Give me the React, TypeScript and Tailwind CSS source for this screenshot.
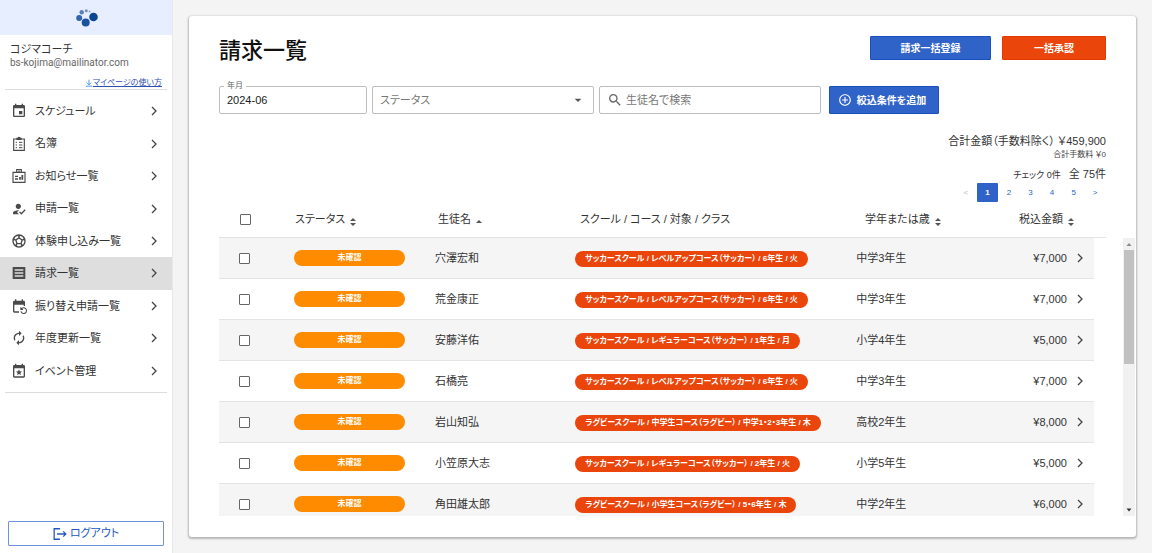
import type { ComponentType, ReactNode } from "react";
import {
  MdAddCircleOutline,
  MdArrowDropDown,
  MdAutorenew,
  MdEventRepeat,
  MdHowToReg,
  MdInsertInvitation,
  MdSearch,
  MdSportsSoccer,
} from "react-icons/md";

type IconProps = { className?: string };

const svgBase = { viewBox: "0 0 24 24", fill: "none", stroke: "currentColor", strokeWidth: 2 } as const;

function RosterIcon({ className }: IconProps) {
  return (
    <svg {...svgBase} className={className} aria-hidden="true">
      <path d="M4 4.500h16v17H4z" strokeWidth="1.700" />
      <path d="M9 5V3.500h1.500a1.500 1.500 0 0 1 3 0H15V5z" fill="currentColor" />
      <path d="M7 9.500h2M7 13.500h2M7 17.500h2M12 9.500h5M12 13.500h5M12 17.500h5" strokeWidth="1.500" />
    </svg>
  );
}

function NoticeIcon({ className }: IconProps) {
  return (
    <svg {...svgBase} className={className} aria-hidden="true">
      <path d="M3 6.500h18v15H3zM8.500 6.500v-4h7v4" strokeWidth="1.700" />
      <path d="M11 5h2" />
      <path d="M6 12.500h4.500M6 16.500h4.500" />
      <path d="M13.500 17.500v-4M17 17.500v-7" strokeWidth="2.600" />
    </svg>
  );
}

function InvoiceIcon({ className }: IconProps) {
  return (
    <svg viewBox="0 0 24 24" fill="currentColor" fillRule="evenodd" className={className} aria-hidden="true">
      <path d="M2.500 3h19v18h-19zM5.500 6.500v2h13v-2zM5.500 11v2h13v-2zM5.500 15.500v2h13v-2z" />
    </svg>
  );
}

function EventStarIcon({ className }: IconProps) {
  return (
    <svg viewBox="0 0 24 24" fill="currentColor" className={className} aria-hidden="true">
      <path
        fillRule="evenodd"
        d="M19 3h-1V1h-2v2H8V1H6v2H5a2 2 0 0 0-2 2v15c0 1.100.900 2 2 2h14a2 2 0 0 0 2-2V5a2 2 0 0 0-2-2zm0 17H5V8h14z"
      />
      <path d="m12 9.500 1.300 3 3.200.300-2.400 2.100.700 3.200-2.800-1.700-2.800 1.700.700-3.200-2.400-2.100 3.200-.300z" />
    </svg>
  );
}

function LogoutIcon({ className }: IconProps) {
  return (
    <svg {...svgBase} className={className} aria-hidden="true">
      <path d="M12 3H2v18h10M7 12h15M17.500 7.500 22 12l-4.500 4.500" strokeWidth="2.200" />
    </svg>
  );
}

function DownloadIcon({ className }: IconProps) {
  return (
    <svg {...svgBase} className={className} aria-hidden="true">
      <path d="M12 2v15M5.500 11l6.500 6.500 6.500-6.500M3 21.500h18" strokeWidth="2.600" />
    </svg>
  );
}

function ChevronIcon({ className }: IconProps) {
  return (
    <svg viewBox="0 0 6 10" fill="none" stroke="currentColor" strokeWidth="1.3" className={className} aria-hidden="true">
      <path d="m1 1 4 4-4 4" />
    </svg>
  );
}

function SortIcon({ up = false }: { up?: boolean }) {
  return (
    <svg viewBox="0 0 6 8" fill="currentColor" className="mt-1 h-2 w-1.5 text-[#555]" aria-hidden="true">
      {up ? <path d="M0 5l3-3 3 3z" /> : <path d="M0 3l3-3 3 3zM0 5h6L3 8z" />}
    </svg>
  );
}

function Logo() {
  return (
    <svg viewBox="0 0 22 18" className="ml-0.5 h-[18px] w-[22px]" role="img" aria-label="ロゴ">
      <circle cx="17.500" cy="8" r="4.300" fill="#0c4596" />
      <circle cx="9.700" cy="13.500" r="4" fill="#1a52a0" />
      <circle cx="3.200" cy="9" r="3" fill="#3363a9" />
      <circle cx="5.700" cy="3.300" r="2.200" fill="#5b80b9" />
      <circle cx="10.300" cy="1.700" r="1.500" fill="#7090c2" />
      <circle cx="13.600" cy="2.600" r="1" fill="#8ba6cf" />
    </svg>
  );
}

const menu: { label: string; icon: ComponentType<IconProps>; active?: boolean }[] = [
  { label: "スケジュール", icon: MdInsertInvitation },
  { label: "名簿", icon: RosterIcon },
  { label: "お知らせ一覧", icon: NoticeIcon },
  { label: "申請一覧", icon: MdHowToReg },
  { label: "体験申し込み一覧", icon: MdSportsSoccer },
  { label: "請求一覧", icon: InvoiceIcon, active: true },
  { label: "振り替え申請一覧", icon: MdEventRepeat },
  { label: "年度更新一覧", icon: MdAutorenew },
  { label: "イベント管理", icon: EventStarIcon },
];

const invoices = [
  { name: "穴澤宏和", course: "サッカースクール / レベルアップコース（サッカー） / 6年生 / 火", grade: "中学3年生", amount: "¥7,000" },
  { name: "荒金康正", course: "サッカースクール / レベルアップコース（サッカー） / 6年生 / 火", grade: "中学3年生", amount: "¥7,000" },
  { name: "安藤洋佑", course: "サッカースクール / レギュラーコース（サッカー） / 1年生 / 月", grade: "小学4年生", amount: "¥5,000" },
  { name: "石橋亮", course: "サッカースクール / レベルアップコース（サッカー） / 6年生 / 火", grade: "中学3年生", amount: "¥7,000" },
  { name: "岩山知弘", course: "ラグビースクール / 中学生コース（ラグビー） / 中学1・2・3年生 / 木", grade: "高校2年生", amount: "¥8,000" },
  { name: "小笠原大志", course: "サッカースクール / レギュラーコース（サッカー） / 2年生 / 火", grade: "小学5年生", amount: "¥5,000" },
  { name: "角田雄太郎", course: "ラグビースクール / 小学生コース（ラグビー） / 5・6年生 / 木", grade: "中学2年生", amount: "¥6,000" },
];

const rowGrid = "grid grid-cols-[76fr_143fr_142fr_285fr_241fr] items-center";
const checkboxClass =
  "block size-[11px] appearance-none rounded-[1px] border border-[#666] bg-white checked:bg-[#2f63c8]";

function Sidebar() {
  return (
    <aside className="flex w-[173px] shrink-0 flex-col border-r border-[#e8e8e8] bg-white">
      <div className="flex h-[35px] items-center justify-center bg-[#e6eeff]">
        <Logo />
      </div>
      <div className="mx-[5px] border-b border-[#ddd] px-[5px] pt-[7px]">
        <p className="text-[11px] leading-[14px]">コジマコーチ</p>
        <p className="font-[Roboto,sans-serif] text-[10px] leading-[14px] text-[#666]">bs-kojima@mailinator.com</p>
        <a href="#guide" className="mt-1.5 flex items-center justify-end text-[8px] leading-[13px] text-[#3050b0]">
          <DownloadIcon className="size-2 text-[#3b8be0]" />
          <span className="underline">マイページの使い方</span>
        </a>
      </div>
      <nav className="mt-[5px] grid h-[292px] auto-rows-fr">
        {menu.map(({ label, icon: Icon, active }) => (
          <a
            key={label}
            href="#menu"
            aria-current={active ? "page" : undefined}
            className={`flex items-center pr-[15px] pl-[11px] text-[11px] ${active ? "bg-[#dedede]" : ""}`}
          >
            <Icon className="size-4 shrink-0 text-[#4a4a4a]" />
            <span className="ml-2 flex-1 whitespace-nowrap">{label}</span>
            <ChevronIcon className="h-2.5 w-1.5 text-[#444]" />
          </a>
        ))}
      </nav>
      <hr className="mx-[5px] mt-[5px] border-[#ddd]" />
      <button
        type="button"
        className="mx-2 mt-auto mb-[7px] flex h-[25px] items-center justify-center gap-[3px] rounded-[1px] border border-[#6d93dd] text-[11px] text-[#2257c0]"
      >
        <LogoutIcon className="size-3.5" />
        ログアウト
      </button>
    </aside>
  );
}

function HeaderCell({ children, className = "" }: { children: ReactNode; className?: string }) {
  return (
    <th scope="col" className={`flex items-center gap-[5px] text-left font-normal whitespace-nowrap ${className}`}>
      {children}
    </th>
  );
}

function Filters() {
  return (
    <form className="mt-5 flex gap-[5px]">
      <div className="relative">
        <label htmlFor="month" className="absolute -top-1.5 left-[5px] bg-white px-[3px] text-[8px] leading-[12px] text-[#666]">
          年月
        </label>
        <input
          id="month"
          type="text"
          defaultValue="2024-06"
          className="h-7 w-[148px] rounded-[2px] border border-[#bdbdbd] px-[7px] text-[11px] text-[#222]"
        />
      </div>
      <div className="relative">
        <select
          aria-label="ステータス"
          className="h-7 w-[222px] appearance-none rounded-[2px] border border-[#bdbdbd] px-[7px] text-[11px] text-[#777]"
        >
          <option>ステータス</option>
          <option>未確認</option>
        </select>
        <MdArrowDropDown className="pointer-events-none absolute top-1.5 right-2 size-4 text-[#555]" />
      </div>
      <div className="flex h-7 w-[222px] items-center gap-[3px] rounded-[2px] border border-[#bdbdbd] px-[7px]">
        <MdSearch className="size-4 shrink-0 text-[#666]" />
        <input
          type="search"
          aria-label="生徒名で検索"
          placeholder="生徒名で検索"
          className="min-w-0 flex-1 text-[11px] placeholder:text-[#777]"
        />
      </div>
      <button
        type="button"
        className="ml-[3px] flex h-7 w-[110px] items-center justify-center gap-[5px] rounded-[1px] border border-[#1d50bd] bg-[#2f63c8] pr-1 text-[10px] font-bold text-white"
      >
        <MdAddCircleOutline className="size-3.5" />
        絞込条件を追加
      </button>
    </form>
  );
}

function Summary() {
  return (
    <div className="mt-[18px] flex flex-col items-end">
      <p className="text-[11px] leading-[18px]">合計金額（手数料除く） ￥459,900</p>
      <p className="text-[8px] leading-[10px] text-[#444]">合計手数料 ￥0</p>
      <p className="mt-1.5 flex items-baseline gap-2 text-[11px] leading-[16px]">
        <span className="text-[9px]">チェック 0件</span>
        <span>全 75件</span>
      </p>
      <nav aria-label="ページ" className="grid w-[151px] grid-cols-7 text-[8px] text-[#2f63c8]">
        <button type="button" disabled className="h-[19px] text-[#bbb]">
          &lt;
        </button>
        <button type="button" aria-current="page" className="h-[19px] rounded-[1px] bg-[#2f63c8] font-bold text-white">
          1
        </button>
        {["2", "3", "4", "5", ">"].map((p) => (
          <button key={p} type="button" className="h-[19px]">
            {p}
          </button>
        ))}
      </nav>
    </div>
  );
}

function InvoiceTable() {
  return (
    <div className="flex min-h-0 flex-1">
      <table className="flex min-w-0 flex-1 flex-col text-[11px]">
        <thead className="block border-b border-[#e4e4e4]">
          <tr className={`${rowGrid} h-[35px]`}>
            <HeaderCell className="pl-[21px]">
              <input type="checkbox" aria-label="すべて選択" className={checkboxClass} />
            </HeaderCell>
            <HeaderCell>
              ステータス
              <SortIcon />
            </HeaderCell>
            <HeaderCell>
              生徒名
              <SortIcon up />
            </HeaderCell>
            <HeaderCell>スクール / コース / 対象 / クラス</HeaderCell>
            <th scope="col" className="flex justify-between pr-8 font-normal whitespace-nowrap">
              <span className="flex items-center gap-[5px]">
                学年または歳
                <SortIcon />
              </span>
              <span className="flex items-center gap-[5px]">
                税込金額
                <SortIcon />
              </span>
            </th>
          </tr>
        </thead>
        <tbody className="mr-3 block min-h-0 flex-1 overflow-hidden">
          {invoices.map((row) => (
            <tr key={row.name} className={`${rowGrid} h-[41px] border-b border-[#e4e4e4] odd:bg-[#f5f5f5]`}>
              <td className="pl-5">
                <input type="checkbox" aria-label={`${row.name}を選択`} className={checkboxClass} />
              </td>
              <td>
                <span className="block h-4 w-[111px] rounded-full bg-[#ff8c00] text-center text-[8px] leading-[16px] font-bold text-white">
                  未確認
                </span>
              </td>
              <td>{row.name}</td>
              <td className="flex pt-px">
                <span className="h-4 rounded-full bg-[#ea450b] px-2.5 text-[8px] leading-[16px] font-bold whitespace-nowrap text-white">
                  {row.course}
                </span>
              </td>
              <td className="flex items-center pr-[11px]">
                <span className="flex-1">{row.grade}</span>
                <span>{row.amount}</span>
                <ChevronIcon className="ml-2.5 h-2.5 w-1.5 text-[#444]" />
              </td>
            </tr>
          ))}
        </tbody>
      </table>
      <div className="mt-9 ml-[17px] flex w-3 flex-col items-center bg-[#f1f1f1]" aria-hidden="true">
        <svg viewBox="0 0 12 12" className="size-3 shrink-0" fill="#888">
          <path d="M3.500 8 6 5l2.500 3z" />
        </svg>
        <div className="h-[41%] w-2.5 bg-[#c1c1c1]" />
        <svg viewBox="0 0 12 12" className="mt-auto size-3 shrink-0" fill="#333">
          <path d="M3.500 4.500 6 7.500l2.500-3z" />
        </svg>
      </div>
    </div>
  );
}

export default function App() {
  return (
    <div
      lang="ja"
      className="flex h-screen bg-[#f4f4f4] font-['Liberation_Sans','Noto_Sans_CJK_JP',sans-serif] text-[#333] [font-feature-settings:'palt']"
    >
      <Sidebar />
      <main className="flex min-w-0 flex-1 p-4">
        <section className="flex min-w-0 flex-1 flex-col rounded-[3px] bg-white pt-5 pr-px pb-[21px] pl-[30px] shadow-[0_1px_2px_1px_rgba(0,0,0,0.25)]">
          <div className="pr-[29px]">
            <header className="flex items-start gap-[11px]">
              <h1 className="mr-auto text-[22px] leading-[30px] font-medium text-[#111]">請求一覧</h1>
              <button
                type="button"
                className="h-6 w-[121px] rounded-[1px] border border-[#1d50bd] bg-[#2f63c8] text-[10px] font-bold text-white"
              >
                請求一括登録
              </button>
              <button
                type="button"
                className="h-6 w-[104px] rounded-[1px] border border-[#e03c00] bg-[#ea450b] text-[10px] font-bold text-white"
              >
                一括承認
              </button>
            </header>
            <Filters />
            <Summary />
          </div>
          <InvoiceTable />
        </section>
      </main>
    </div>
  );
}
